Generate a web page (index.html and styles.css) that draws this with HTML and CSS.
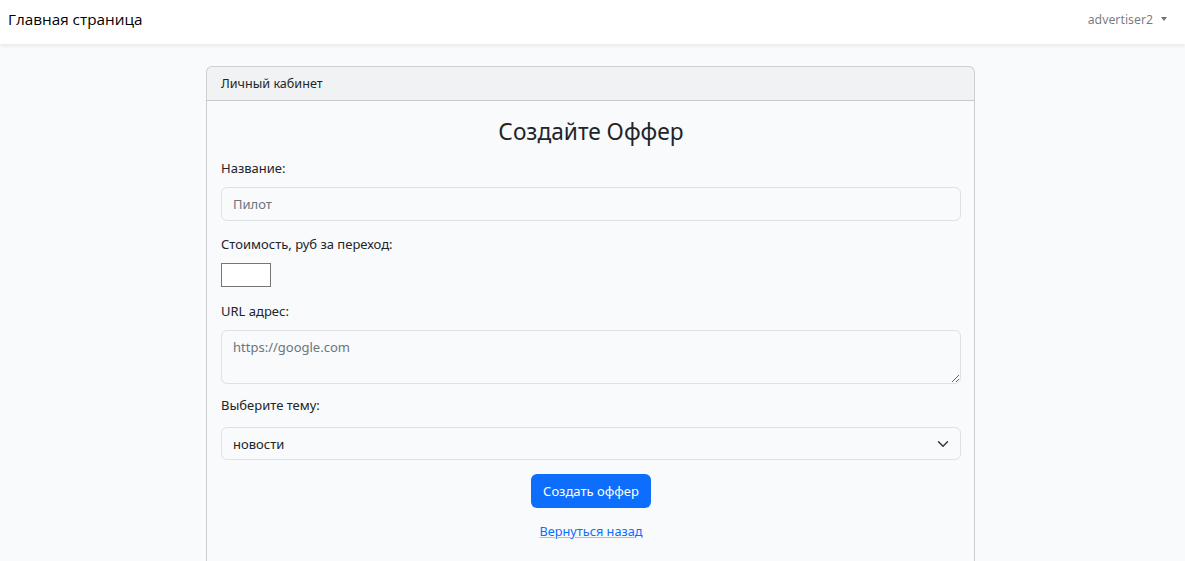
FILE: index.html
```html
<!DOCTYPE html>
<html lang="ru">
<head>
<meta charset="utf-8">
<title>Создайте Оффер</title>
<link rel="stylesheet" href="styles.css">
</head>
<body>
<nav class="navbar">
  <a class="brand" href="#">Главная страница</a>
  <a class="user" href="#">advertiser2 <span class="caret"></span></a>
</nav>
<main class="main">
  <div class="card">
    <div class="card-header">Личный кабинет</div>
    <div class="card-body">
      <h3 class="title">Создайте Оффер</h3>
      <div class="group">
        <label class="label">Название:</label>
        <input class="control" type="text" placeholder="Пилот">
      </div>
      <div class="group group-price">
        <label class="label">Стоимость, руб за переход:</label>
        <input class="num" type="number">
      </div>
      <div class="group group-url">
        <label class="label">URL адрес:</label>
        <textarea class="control area" placeholder="https://google.com"></textarea>
      </div>
      <div class="group group-topic">
        <label class="label">Выберите тему:</label>
        <div class="select">
          <span>новости</span>
          <svg width="16" height="16" viewBox="0 0 16 16"><path d="M2 5l6 6 6-6" fill="none" stroke="#343a40" stroke-width="2" stroke-linecap="round" stroke-linejoin="round"/></svg>
        </div>
      </div>
      <div class="actions">
        <button class="btn">Создать оффер</button>
        <a class="back" href="#">Вернуться назад</a>
      </div>
    </div>
  </div>
</main>
</body>
</html>
```
FILE: styles.css
```css
* { box-sizing: border-box; }
html, body { margin: 0; padding: 0; }
body {
  background: #f8fafc;
  font-family: "Noto Sans", "Open Sans", sans-serif;
  font-size: 13px;
  color: #212529;
  height: 561px;
  overflow: hidden;
}
.navbar {
  height: 44px;
  background: #fff;
  box-shadow: 0 2px 4px rgba(0,0,0,.075);
  display: flex;
  align-items: center;
  justify-content: space-between;
  padding: 0 18px 0 8px;
}
.brand {
  font-family: "Open Sans", "Noto Sans", sans-serif;
  font-size: 15.3px;
  color: #000;
  text-decoration: none;
  padding-bottom: 6px;
}
.user {
  color: rgba(0,0,0,.55);
  text-decoration: none;
  font-size: 12.3px;
  display: flex;
  align-items: center;
  gap: 8px;
  padding-bottom: 6px;
}
.caret {
  width: 0; height: 0;
  border-left: 3.5px solid transparent;
  border-right: 3.5px solid transparent;
  border-top: 4px solid rgba(0,0,0,.55);
}
.main { padding-top: 22px; }
.card {
  width: 769px;
  margin: 0 0 0 206px;
  border: 1px solid rgba(0,0,0,.175);
  border-radius: 6px;
  background: #f8fafc;
  height: 520px;
}
.card-header {
  height: 34px;
  background: rgba(0,0,0,.03);
  border-bottom: 1px solid rgba(0,0,0,.175);
  border-radius: 5px 5px 0 0;
  padding: 0 14px;
  display: flex;
  align-items: center;
  font-size: 12.6px;
}
.card-body { padding: 15px 13px 0 14px; }
.title {
  margin: 0 0 10px;
  text-align: center;
  font-weight: 400;
  font-size: 22.7px;
  line-height: 32px;
}
.group { margin-bottom: 13px; }
.group-price { margin-bottom: 14px; }
.group-url { margin-bottom: 11px; }
.label {
  display: block;
  line-height: 21px;
  margin-bottom: 8px;
}
.group-topic .label { margin-bottom: 11px; }
.control {
  display: block;
  width: 100%;
  height: 34px;
  padding: 0 11px;
  border: 1px solid #dee2e6;
  border-radius: 6px;
  background: #f8fafc;
  font: inherit;
  color: #212529;
}
.control::placeholder { color: #6c757d; }
.area {
  height: 54px;
  padding-top: 7px;
  resize: vertical;
}
.num {
  display: block;
  width: 50px;
  height: 24px;
  border: 1px solid #767676;
  background: #fff;
  padding: 0 2px;
}
.select {
  height: 33px;
  border: 1px solid #dee2e6;
  border-radius: 6px;
  display: flex;
  align-items: center;
  justify-content: space-between;
  padding: 0 11px;
}
.select svg { width: 12px; height: 12px; }
.actions {
  display: flex;
  flex-direction: column;
  align-items: center;
  margin-top: 14px;
}
.btn {
  height: 34px;
  width: 120px;
  background: #0d6efd;
  color: #fff;
  border: none;
  border-radius: 6px;
  font: inherit;
}
.back {
  margin-top: 13px;
  line-height: 21px;
  font-size: 12.75px;
  color: #0d6efd;
  text-decoration: underline;
  text-decoration-color: rgba(13,110,253,.4);
}
```
